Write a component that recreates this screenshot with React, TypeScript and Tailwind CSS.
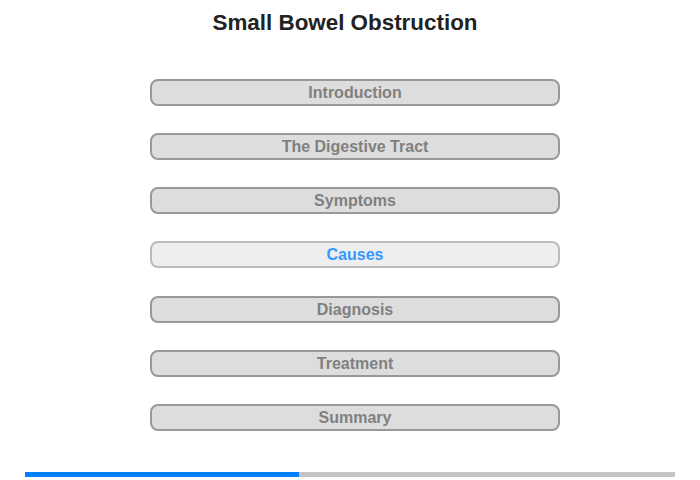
const sections = [
  'Introduction',
  'The Digestive Tract',
  'Symptoms',
  'Causes',
  'Diagnosis',
  'Treatment',
  'Summary',
]

const current = 'Causes'

export default function App() {
  return (
    <div className="flex h-[480px] w-[700px] flex-col bg-white font-['Liberation_Sans',Arial,sans-serif]">
      <h1 className="mt-[9px] pr-[10px] text-center text-[22.4px] font-bold leading-[27px] text-[#222]">
        Small Bowel Obstruction
      </h1>
      <div className="ml-[150px] mt-[43px] flex w-[410px] flex-col gap-[27.15px]">
        {sections.map((s) => {
          const active = s === current
          return (
            <button
              key={s}
              className={
                active
                  ? 'h-[27px] rounded-[8px] border-2 border-[#bbbbbb] bg-[#eeeeee] text-[16px] font-bold leading-[23px] text-[#3399ff]'
                  : 'h-[27px] rounded-[8px] border-2 border-[#999999] bg-[#dddddd] text-[16px] font-bold leading-[23px] text-[#808080]'
              }
            >
              {s}
            </button>
          )
        })}
      </div>
      <div className="mx-[25px] mb-[3px] mt-auto flex h-[5px] bg-[#c4c4c4]">
        <div className="h-full w-[274px] bg-[#0080ff]" />
      </div>
    </div>
  )
}
